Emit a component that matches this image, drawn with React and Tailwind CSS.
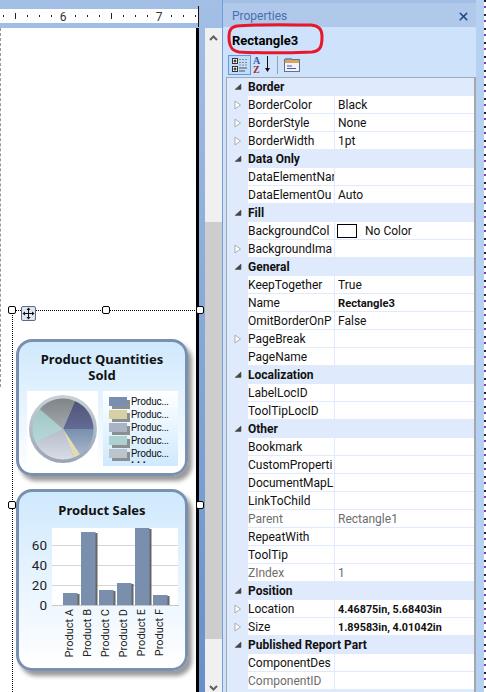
import React from "react";
import { X } from "lucide-react";

const UI = { fontFamily: 'Roboto, "Noto Sans", sans-serif' };
const CHART = { fontFamily: '"Noto Sans", sans-serif' };

const rows = [
  { c: "Border" },
  { n: "BorderColor", v: "Black", a: 1 },
  { n: "BorderStyle", v: "None", a: 1 },
  { n: "BorderWidth", v: "1pt", a: 1 },
  { c: "Data Only" },
  { n: "DataElementNar" },
  { n: "DataElementOu", v: "Auto" },
  { c: "Fill" },
  { n: "BackgroundCol", v: "No Color", sw: 1 },
  { n: "BackgroundIma", a: 1 },
  { c: "General" },
  { n: "KeepTogether", v: "True" },
  { n: "Name", v: "Rectangle3", b: 1 },
  { n: "OmitBorderOnP", v: "False" },
  { n: "PageBreak", a: 1 },
  { n: "PageName" },
  { c: "Localization" },
  { n: "LabelLocID" },
  { n: "ToolTipLocID" },
  { c: "Other" },
  { n: "Bookmark" },
  { n: "CustomProperti" },
  { n: "DocumentMapL" },
  { n: "LinkToChild" },
  { n: "Parent", v: "Rectangle1", g: 1 },
  { n: "RepeatWith" },
  { n: "ToolTip" },
  { n: "ZIndex", v: "1", g: 1 },
  { c: "Position" },
  { n: "Location", v: "4.46875in, 5.68403in", a: 1, b: 2 },
  { n: "Size", v: "1.89583in, 4.01042in", a: 1, b: 2 },
  { c: "Published Report Part" },
  { n: "ComponentDes" },
  { n: "ComponentID", g: 1 },
];

function Tri() {
  return (
    <svg width="8" height="10" viewBox="0 0 8 10">
      <path d="M1 1 L6.5 5 L1 9 Z" fill="#fff" stroke="#a9adb3" strokeWidth="1" />
    </svg>
  );
}
function Collapse() {
  return (
    <svg width="8" height="8" viewBox="0 0 8 8">
      <path d="M7 1 V6.5 H1 Z" fill="#444" stroke="#555" strokeWidth="0.6" />
    </svg>
  );
}

function Row({ r }) {
  if (r.c) {
    return (
      <div className="flex h-[18px] items-center bg-[#dfeafc]">
        <div className="flex w-[21px] shrink-0 justify-center pl-[1px]"><Collapse /></div>
        <div className="text-[12px] font-bold leading-[18px] text-[#111] whitespace-nowrap">{r.c}</div>
      </div>
    );
  }
  const color = r.g ? "text-[#6d6d6d]" : "text-[#111]";
  const valueSize = r.b === 2 ? "text-[10.8px] font-bold" : r.b === 1 ? "text-[11.2px] font-bold" : "text-[12px]";
  return (
    <div className="flex h-[18px] bg-[#dfeafc]">
      <div className="flex w-[21px] shrink-0 items-center justify-center pl-[1px]">{r.a ? <Tri /> : null}</div>
      <div className="flex h-[17px] flex-1 bg-white">
        <div className={`w-[86px] shrink-0 overflow-hidden whitespace-nowrap pt-[1px] text-[12px] leading-[17px] ${color}`}>{r.n}</div>
        <div className="w-[1px] shrink-0 bg-[#dfeafc]" />
        <div className={`flex flex-1 items-center whitespace-nowrap pl-[3px] pt-[1px] leading-[17px] ${color} ${valueSize}`}>
          {r.sw ? <span className="-ml-[1px] mr-[8px] h-[14px] w-[20px] border border-black bg-white" /> : null}
          {r.v}
        </div>
      </div>
    </div>
  );
}

function Ruler() {
  const ticks = [];
  for (let i = 0; i < 17; i++) {
    const x = 3.5 + i * 12;
    if (x === 63.5 || x === 159.5) continue;
    const long = x === 15.5 || x === 111.5;
    ticks.push(<line key={i} x1={x} x2={x} y1={long ? 13 : 15} y2={long ? 19 : 17} stroke="#222" strokeWidth="1" />);
  }
  return (
    <svg width="222" height="28" className="block">
      <rect x="0" y="9" width="198" height="14" fill="#fff" />
      <line x1="198.5" x2="198.5" y1="6" y2="27" stroke="#111" />
      {ticks}
      <text x="63" y="20.5" textAnchor="middle" fontSize="12" fill="#333" style={UI}>6</text>
      <text x="159" y="20.5" textAnchor="middle" fontSize="12" fill="#333" style={UI}>7</text>
    </svg>
  );
}

function Handle({ x, y }) {
  return (
    <div
      className="absolute h-[8px] w-[8px] rounded-[2px] border border-black bg-white"
      style={{ left: x, top: y }}
    />
  );
}

function MoveGrip() {
  return (
    <svg width="15" height="15" viewBox="0 0 15 15" className="absolute left-[21px] top-[278px]">
      <rect x="0.5" y="0.5" width="14" height="14" rx="1.5" fill="#dfe6f2" stroke="#5a6a8a" />
      <path d="M7.5 3 V12 M3 7.5 H12" stroke="#111" />
      <path d="M7.5 1.5 L5.5 4 H9.5 Z M7.5 13.5 L5.5 11 H9.5 Z M1.5 7.5 L4 5.5 V9.5 Z M13.5 7.5 L11 5.5 V9.5 Z" fill="#111" />
    </svg>
  );
}

function Pie() {
  const C = 36;
  const Y = 38;
  const R = 30.5;
  const p = (dx, dy) => `${C + dx * R} ${Y + dy * R}`;
  const slice = (a, b) => `M${C} ${Y} L${p(a[0], a[1])} A${R} ${R} 0 0 1 ${p(b[0], b[1])} Z`;
  return (
    <svg width="71" height="75" viewBox="0 0 71 75" className="block">
      <defs>
        <linearGradient id="ring" x1="0" y1="0" x2="0" y2="1">
          <stop offset="0" stopColor="#c9d2d8" />
          <stop offset="1" stopColor="#98a4b4" />
        </linearGradient>
        <linearGradient id="navy" x1="0" y1="0" x2="0" y2="1">
          <stop offset="0" stopColor="#4f5578" />
          <stop offset="1" stopColor="#646b94" />
        </linearGradient>
        <linearGradient id="blue" x1="0" y1="0" x2="0" y2="1">
          <stop offset="0" stopColor="#7890ae" />
          <stop offset="1" stopColor="#a5b4ca" />
        </linearGradient>
        <linearGradient id="grayT" x1="0" y1="0" x2="0" y2="1">
          <stop offset="0" stopColor="#7f8587" />
          <stop offset="1" stopColor="#a2a8ad" />
        </linearGradient>
        <linearGradient id="teal" x1="0" y1="0" x2="0" y2="1">
          <stop offset="0" stopColor="#a0c6c6" />
          <stop offset="1" stopColor="#b8d8d8" />
        </linearGradient>
        <linearGradient id="grayL" x1="0" y1="0" x2="0" y2="1">
          <stop offset="0" stopColor="#b5bbc9" />
          <stop offset="1" stopColor="#d8dde6" />
        </linearGradient>
      </defs>
      <circle cx={C} cy={Y} r="34" fill="url(#ring)" />
      <path d={slice([0.387, -0.921], [1, 0])} fill="url(#navy)" />
      <path d={slice([1, 0], [0.557, 0.83])} fill="url(#blue)" />
      <path d={slice([0.557, 0.83], [0.356, 0.935])} fill="#e2dcb2" />
      <path d={slice([0.356, 0.935], [-0.897, 0.443])} fill="url(#grayL)" />
      <path d={slice([-0.897, 0.443], [-0.76, -0.65])} fill="url(#teal)" />
      <path d={slice([-0.76, -0.65], [0.387, -0.921])} fill="url(#grayT)" />
    </svg>
  );
}

const legend = ["#7a8fb0", "#d6d0a4", "#a8b4c4", "#aed0d0", "#bcc4cc"];

function Legend() {
  return (
    <div className="flex h-[75px] w-[75px] flex-col bg-gradient-to-b from-white to-[#cfe9fd] pl-[6px] pt-[4px]">
      {legend.map((c) => (
        <div key={c} className="flex h-[13px] items-center">
          <span className="h-[9px] w-[18px] shrink-0 shadow-[3px_3px_0_#8a8f94]" style={{ background: c }} />
          <span className="ml-[4px] text-[10px] leading-[13px] tracking-[-0.2px] text-[#111]" style={UI}>Produc...</span>
        </div>
      ))}
      <div className="ml-[22px] text-[8px] font-bold leading-[6px] tracking-[3px] text-[#222]">•••</div>
    </div>
  );
}

const bars = [
  ["Product A", 63, 593],
  ["Product B", 81, 532],
  ["Product C", 99, 590],
  ["Product D", 117, 583],
  ["Product E", 135, 528],
  ["Product F", 153, 595],
];

function BarChart() {
  const ox = 28;
  const oy = 524;
  return (
    <svg width="152" height="136" viewBox="0 0 152 136" className="block" style={UI}>
      <rect x={52 - ox} y={528 - oy} width="126" height={78} fill="#fff" />
      {[545, 565, 585].map((y) => (
        <line key={y} x1={52 - ox} x2={178 - ox} y1={y - oy + 0.5} y2={y - oy + 0.5} stroke="#d6d6d6" />
      ))}
      <line x1={52 - ox} x2={179 - ox} y1={605.5 - oy} y2={605.5 - oy} stroke="#c4c8cc" />
      {[["60", 545], ["40", 565], ["20", 585], ["0", 605]].map(([t, y]) => (
        <text key={t} x={47 - ox} y={y - oy + 5} textAnchor="end" fontSize="13.5" fill="#222" style={UI}>{t}</text>
      ))}
      {bars.map(([l, x, top]) => (
        <g key={l}>
          <rect x={x - ox + 2} y={top - oy + 1} width="14.5" height={605 - top - 1} fill="#666" />
          <rect x={x - ox} y={top - oy} width="14.5" height={605 - top} fill="#7a8fae" />
          <text
            transform={`translate(${x - ox + 10},${609 - oy}) rotate(-90)`}
            textAnchor="end"
            fontSize="11"
            fill="#222"
            style={UI}
          >{l}</text>
        </g>
      ))}
    </svg>
  );
}

function Card({ h, children }) {
  return (
    <div
      className="w-[172px] rounded-[16px] border-[3px] border-[#7a90b0] bg-gradient-to-b from-[#cfe9fd] to-white shadow-[4px_5px_4px_#9a9a9a]"
      style={{ height: h }}
    >
      {children}
    </div>
  );
}

function CategorizedIcon() {
  return (
    <svg width="18" height="17" viewBox="0 0 18 17">
      <rect x="1.5" y="1.5" width="5" height="5" fill="#fff" stroke="#333" />
      <path d="M2.5 4 H5.5 M4 2.5 V5.5" stroke="#000" />
      <rect x="1.5" y="9.5" width="5" height="5" fill="#fff" stroke="#333" />
      <path d="M2.5 12 H5.5 M4 10.5 V13.5" stroke="#000" />
      <path d="M8 2.5 H16 M8 5.5 H16 M8 8 H16" stroke="#8c8f80" strokeDasharray="2 1" />
      <path d="M8 11 H16 M8 14 H14" stroke="#4a5560" />
    </svg>
  );
}

function AzIcon() {
  return (
    <svg width="22" height="18" viewBox="0 0 22 18">
      <text x="0" y="8" fontSize="10" fontWeight="700" fill="#3557a8" style={{ fontFamily: '"Liberation Serif", serif' }}>A</text>
      <text x="0" y="17" fontSize="10" fontWeight="700" fill="#9c2b2b" style={{ fontFamily: '"Liberation Serif", serif' }}>Z</text>
      <path d="M14.5 0 V14" stroke="#111" />
      <path d="M12 12 H17 L14.5 16 Z" fill="#111" />
    </svg>
  );
}

function PagesIcon() {
  return (
    <svg width="16" height="16" viewBox="0 0 16 16">
      <rect x="0.5" y="2.5" width="15" height="12" fill="#f2f3fa" stroke="#66708c" />
      <rect x="1" y="3" width="14" height="3" fill="#d9a35c" />
      <rect x="1" y="1" width="7" height="2" fill="#7d8fb8" />
      <path d="M3 9 H8 M3 11.5 H12" stroke="#3f5a9c" />
    </svg>
  );
}

export default function App() {
  return (
    <div className="flex h-[692px] w-[486px] overflow-hidden bg-gradient-to-b from-[#a3bfe6] to-[#6890c8]" style={UI}>
      <div className="flex w-[222px] shrink-0 flex-col">
        <Ruler />
        <div className="relative flex flex-1">
          <div className="relative w-[196px] shrink-0 overflow-hidden bg-white pl-[16px] pt-[311px]">
            <div className="absolute left-0 top-0 h-[359px] border-l border-dashed border-[#999]" />
            <div className="absolute bottom-0 left-[12px] top-[282px] border-l border-dotted border-black" />
            <Card h={137}>
              <div className="pt-[9px] text-center text-[13px] font-bold leading-[16px] text-[#111]" style={CHART}>
                <span className="block">Product Quantities</span>
                <span className="block">Sold</span>
              </div>
              <div className="mt-[8px] flex gap-[5px] pl-[8px]">
                <div className="bg-white"><Pie /></div>
                <Legend />
              </div>
            </Card>
            <div className="mt-[13px]">
              <Card h={182}>
                <div className="pt-[10px] text-center text-[13px] font-bold leading-[16px] text-[#111]" style={CHART}>Product Sales</div>
                <div className="mt-[6px] pl-[9px]"><BarChart /></div>
              </Card>
            </div>
          </div>
          <div className="w-[3px] shrink-0 bg-black" />
          <div className="w-[6px] shrink-0" />
          <div className="flex w-[17px] shrink-0 flex-col items-center bg-[#f0f0f0]">
            <svg width="9" height="6" viewBox="0 0 9 6" className="mt-[7px] shrink-0"><path d="M1 5 L4.5 1.5 L8 5" fill="none" stroke="#606060" strokeWidth="2" /></svg>
            <div className="mt-[181px] h-[417px] w-full bg-[#cdcdcd]" />
            <svg width="9" height="6" viewBox="0 0 9 6" className="mt-[46px] shrink-0"><path d="M1 1 L4.5 4.5 L8 1" fill="none" stroke="#606060" strokeWidth="2" /></svg>
          </div>
          <div className="absolute left-[12px] top-[282px] w-[187px] border-t border-dotted border-black" />
          <Handle x={8} y={278} />
          <Handle x={102} y={278} />
          <Handle x={196} y={278} />
          <Handle x={8} y={473} />
          <Handle x={196} y={473} />
          <MoveGrip />
        </div>
      </div>

      <div className="relative flex w-[254px] shrink-0 flex-col border-l border-[#6f9ee0] pt-[3px]">
        <div className="flex h-[24px] shrink-0 items-center justify-between bg-[#b0c8ea] pl-[9px] pr-[5px] pt-[2px] text-[12px] text-[#4a6fae]">
          <span>Properties</span>
          <X size={13} strokeWidth={3} color="#1c4a8a" className="mr-[1px]" />
        </div>
        <div className="flex min-h-0 flex-1 flex-col bg-[#cfe2fb]">
          <div className="flex h-[28px] shrink-0 items-center pl-[9px] text-[13px] font-bold text-black">Rectangle3</div>
          <div className="flex h-[20px] shrink-0 items-center pl-[5px]">
            <div className="flex h-[20px] w-[23px] items-center justify-center border border-[#5a9be0] bg-[#c2dcf9]"><CategorizedIcon /></div>
            <div className="ml-[1px] flex w-[24px] justify-center"><AzIcon /></div>
            <div className="ml-[1px] h-[18px] w-[1px] bg-[#8fa0b8]" />
            <div className="ml-[6px]"><PagesIcon /></div>
          </div>
          <div className="ml-[3px] mt-[2px] min-h-0 flex-1 overflow-hidden border-l border-r-2 border-t border-[#a3a8b0] bg-[#dfeafc]">
            {rows.map((r, i) => <Row key={i} r={r} />)}
          </div>
        </div>
        <svg width="98" height="32" viewBox="0 0 98 32" className="absolute left-[4px] top-[23px]">
          <path d="M10 3 C30 1 70 2 84 2 C92 3 95 6 95 14 C95 24 93 28 85 29 C60 30 30 30 12 29 C5 28 2 24 2 14 C2 7 4 4 10 3 Z" fill="none" stroke="#e8182c" strokeWidth="3" />
        </svg>
      </div>

      <div className="w-[8px] shrink-0 bg-[#b5d0f0]" />
      <div className="w-[2px] shrink-0 bg-[repeating-linear-gradient(to_bottom,#222_0,#222_2px,#fff_2px,#fff_6px,#7a3fa0_6px,#7a3fa0_8px,#fff_8px,#fff_14px)]" />
    </div>
  );
}
